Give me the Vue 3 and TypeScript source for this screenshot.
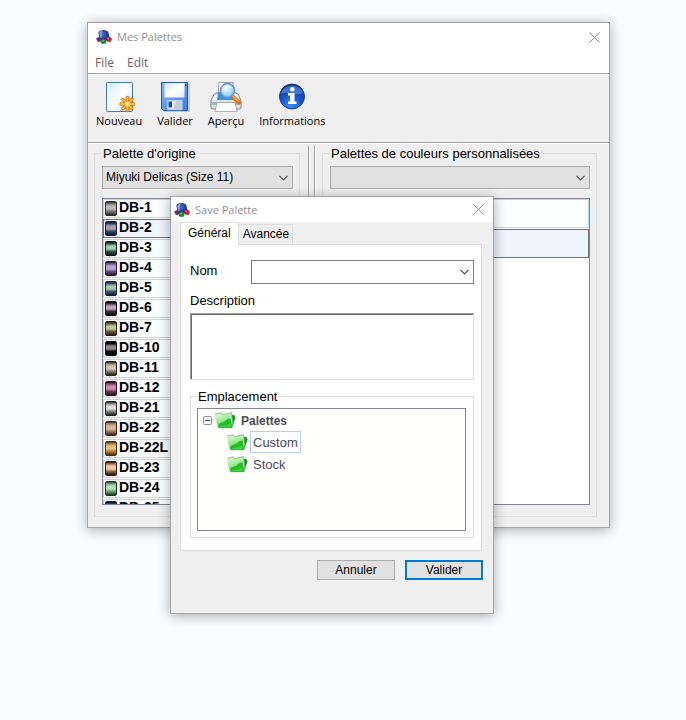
<script setup lang="ts">
import { ref } from 'vue'

interface Bead {
  code: string
  dark: string
  light: string
  base: string
}

const beads: Bead[] = [
  { code: 'DB-1', dark: '#2b2a2a', light: '#bdbbb8', base: '#77736f' },
  { code: 'DB-2', dark: '#10182c', light: '#b79aa8', base: '#1f4a78' },
  { code: 'DB-3', dark: '#0a1512', light: '#9fd0b4', base: '#2c5546' },
  { code: 'DB-4', dark: '#241a30', light: '#bda2d6', base: '#66507e' },
  { code: 'DB-5', dark: '#151c2a', light: '#a8c8ac', base: '#3f5878' },
  { code: 'DB-6', dark: '#0c090c', light: '#c69fc4', base: '#3a3038' },
  { code: 'DB-7', dark: '#2c1e12', light: '#b4cc9a', base: '#6e5434' },
  { code: 'DB-10', dark: '#000000', light: '#8d8d8d', base: '#0c0c0c' },
  { code: 'DB-11', dark: '#26221c', light: '#d2c8b4', base: '#857a66' },
  { code: 'DB-12', dark: '#250f1c', light: '#cc8cb4', base: '#75395c' },
  { code: 'DB-21', dark: '#20221f', light: '#dcded6', base: '#80857c' },
  { code: 'DB-22', dark: '#37251b', light: '#dcb898', base: '#a07a5e' },
  { code: 'DB-22L', dark: '#4a2e0e', light: '#e8c078', base: '#b07e34' },
  { code: 'DB-23', dark: '#2c1410', light: '#e8d0a4', base: '#98604a' },
  { code: 'DB-24', dark: '#1e3424', light: '#b0e4b4', base: '#6aa078' },
  { code: 'DB-25', dark: '#101030', light: '#8890d0', base: '#283078' }
]

const selectedBead = ref('DB-2')
const origin = ref('Miyuki Delicas (Size 11)')
const custom = ref('')
const paletteName = ref('')
const description = ref('')
const expanded = ref(true)
const selectedFolder = ref('Custom')
const folders = ['Custom', 'Stock']
</script>

<template>
  <svg class="defs" width="0" height="0" aria-hidden="true">
    <defs>
      <linearGradient id="gSheet" x1="0" y1="0" x2="1" y2="1">
        <stop offset="0" stop-color="#d3e9fa" /><stop offset=".5" stop-color="#ffffff" /><stop offset="1" stop-color="#c4e0f4" />
      </linearGradient>
      <linearGradient id="gDisk" x1="0" y1="0" x2="1" y2="1">
        <stop offset="0" stop-color="#7ebdfa" /><stop offset="1" stop-color="#3a7aec" />
      </linearGradient>
      <linearGradient id="gLabel" x1="0" y1="0" x2="1" y2="1">
        <stop offset="0" stop-color="#d8e6fa" /><stop offset=".55" stop-color="#ffffff" /><stop offset="1" stop-color="#dfeafc" />
      </linearGradient>
      <radialGradient id="gInfo" cx=".45" cy=".85" r=".8">
        <stop offset="0" stop-color="#3b8df0" /><stop offset=".55" stop-color="#1553cc" /><stop offset="1" stop-color="#0c37a0" />
      </radialGradient>
      <radialGradient id="gLens" cx=".4" cy=".35" r=".75">
        <stop offset="0" stop-color="#f2fcff" /><stop offset=".6" stop-color="#a4daf6" /><stop offset="1" stop-color="#6db8ea" />
      </radialGradient>
      <linearGradient id="gFolder" x1="0" y1="0" x2=".5" y2="1">
        <stop offset="0" stop-color="#e2fcdc" /><stop offset=".5" stop-color="#9cf092" /><stop offset="1" stop-color="#48d044" />
      </linearGradient>
      <radialGradient id="gBlue" cx=".4" cy=".4" r=".7">
        <stop offset="0" stop-color="#3f6cd4" /><stop offset="1" stop-color="#141d70" />
      </radialGradient>
      <symbol id="appLogo" viewBox="0 0 16 16">
        <path d="M2.500 3.500C2.500 0 12 0 12.500 3.500L13.500 10.500C12.500 12 4.500 12 3.500 10.500Z" fill="url(#gBlue)" />
        <path d="M3.500 3.500C3.500 2 6.500 1.500 6.500 1.500L5.500 9 4 9Z" fill="#a5bdda" opacity=".75" />
        <path d="M0 9.500 3 8 5.500 9.500 5 12.500 2 13Z" fill="#6d2580" />
        <path d="M10 8.500 14 7.500 16 10 14.500 13 11 12.500Z" fill="#d01636" />
        <path d="M11 9 13.500 8.500 12.500 11Z" fill="#ee6680" />
        <path d="M4.500 11 7.500 9.500 10.500 11 10 14.500 6.500 15 5 14Z" fill="#218a30" />
        <path d="M5.500 11.500 8 10.700 7.500 13Z" fill="#62cc58" />
      </symbol>
      <symbol id="folder" viewBox="0 0 22 18">
        <path d="M14 6 20 3.500 21.500 6.500 18.500 14 14.500 16.500Z" fill="#1d8f1e" />
        <path d="M1 3 7.500 1.800 9 3.500 17.500 1.500 18.800 12 17 16.500Z" fill="#b4f0ae" stroke="#6aa868" stroke-width=".6" />
        <path d="M.7 3.500 7 3 9 6.200 16.500 5.200 18 16.500 4.500 16.500C3 14 1.500 8 .7 3.500Z" fill="url(#gFolder)" />
        <path d="M3.800 15C5.500 10.500 9 12.500 11.500 9.500 13 7.800 15 7.500 16.800 7.800L18 16.500H4.500Z" fill="#16b81c" opacity=".85" />
        <path d="M5.500 16C9 14 13 15.500 16 12L17 16.300Z" fill="#5ce056" opacity=".6" />
        <path d="M4.500 16.700H18.200L20.800 7" fill="none" stroke="#2a8a2c" stroke-width=".6" />
      </symbol>
      <symbol id="cross" viewBox="0 0 11 11">
        <path d="M.5.5 10.500 10.500M10.500.5.5 10.500" stroke="#8c8c8c" fill="none" />
      </symbol>
      <symbol id="chevron" viewBox="0 0 9 6">
        <path d="M.5.8 4.500 4.800 8.500.8" stroke="#4c4c4c" stroke-width="1.200" fill="none" />
      </symbol>
    </defs>
  </svg>

  <main class="desktop">
    <section class="window" aria-label="Mes Palettes">
      <header class="titlebar main-title">
        <svg class="logo"><use href="#appLogo" /></svg>
        <h1>Mes Palettes</h1>
        <button class="close" type="button" aria-label="Fermer"><svg><use href="#cross" /></svg></button>
      </header>
      <nav class="menubar">
        <button type="button">File</button>
        <button type="button">Edit</button>
      </nav>

      <div class="toolbar">
        <button type="button">
          <svg viewBox="0 0 32 32">
            <rect x="3.500" y="1.500" width="26" height="29" rx="1" fill="url(#gSheet)" stroke="#3f7fae" />
            <g stroke="#d9741c" stroke-width="3.400" stroke-linecap="round">
              <path d="M24.500 16.500V29.500M18 23H31M20 18.500 29 27.500M29 18.500 20 27.500" />
            </g>
            <g stroke="#ffd44a" stroke-width="1.500" stroke-linecap="round">
              <path d="M24.500 16.500V29.500M18 23H31M20 18.500 29 27.500M29 18.500 20 27.500" />
            </g>
            <circle cx="24.500" cy="23" r="1.600" fill="#fff3a0" />
          </svg>
          <span>Nouveau</span>
        </button>
        <button type="button">
          <svg viewBox="0 0 32 32">
            <path d="M4 3H31V31H5Z" fill="#000" opacity=".15" />
            <path d="M2.500 1.500H28.500V29.500H4.500L2.500 27.500Z" fill="url(#gDisk)" stroke="#2857b8" />
            <path d="M5.500 2H25.500V15.500Q25.500 16.500 24.500 16.500H6.500Q5.500 16.500 5.500 15.500Z" fill="url(#gLabel)" />
            <path d="M8 19H23.500V29H8Z" fill="#e6ecf5" stroke="#7da3dc" stroke-width=".7" />
            <path d="M17 19H23V29H14Z" fill="#c5ccd8" />
            <rect x="9.500" y="20.500" width="3.500" height="6" fill="#244a9c" />
            <path d="M26 3.500H27.500V5H26Z" fill="#173a8c" />
          </svg>
          <span>Valider</span>
        </button>
        <button type="button">
          <svg viewBox="0 0 32 32">
            <path d="M9 1.500H23V16H8Z" fill="#fff" stroke="#9a9a9a" />
            <path d="M4 13.500 8 11.500H25L28.500 13.500 31 20V26.500Q31 28 29 28H3Q1 28 1 26.500V19Z" fill="#dfe3e8" stroke="#7d828a" />
            <path d="M4.500 13.500H28L29.500 19H2.500Z" fill="#f3f5f7" />
            <path d="M8 11.500H22L25 19H7Z" fill="#2e96e4" />
            <path d="M2 21H30V24H2Z" fill="#adb3ba" />
            <path d="M7 21.500H25L27 30.500H5Z" fill="#fbfcfd" stroke="#999da4" stroke-width=".8" />
            <path d="M22.500 15.500 29 21.500" stroke="#d9661a" stroke-width="4" stroke-linecap="round" />
            <path d="M22.500 15 28.500 20.500" stroke="#ffb53c" stroke-width="1.600" stroke-linecap="round" />
            <circle cx="17.500" cy="9.500" r="7" fill="url(#gLens)" stroke="#6794c4" stroke-width="1.500" />
            <path d="M12.500 9C14 4.500 19 4 21.500 6.500 18 7 15 8 12.500 9Z" fill="#fff" opacity=".75" />
          </svg>
          <span>Aperçu</span>
        </button>
        <button type="button">
          <svg viewBox="0 0 32 32">
            <circle cx="16" cy="15.500" r="12.500" fill="url(#gInfo)" stroke="#163a94" />
            <path d="M5 13C7 3 24 1.500 27 12 20 16 12 9 5 13Z" fill="#7eb0f2" opacity=".45" />
            <circle cx="16.300" cy="8.200" r="2.300" fill="#fff" />
            <path d="M12 12H18.500V20.500H20.500V23H12V20.500H14V14.500H12Z" fill="#fff" />
          </svg>
          <span>Informations</span>
        </button>
      </div>

      <div class="panes">
        <fieldset class="group origin">
          <legend>Palette d'origine</legend>
          <div class="combo grey">
            <select v-model="origin" aria-label="Palette d'origine">
              <option>Miyuki Delicas (Size 11)</option>
            </select>
            <svg><use href="#chevron" /></svg>
          </div>
          <ul class="list" role="listbox" aria-label="Palette d'origine">
            <li
              v-for="bead in beads"
              :key="bead.code"
              class="bead"
              role="option"
              :aria-selected="bead.code === selectedBead"
              :class="{ selected: bead.code === selectedBead }"
              @click="selectedBead = bead.code"
            >
              <i :style="{ '--dark': bead.dark, '--light': bead.light, '--base': bead.base }"></i>{{ bead.code }}
            </li>
          </ul>
        </fieldset>
        <div class="splitter" role="separator"></div>
        <fieldset class="group personal">
          <legend>Palettes de couleurs personnalisées</legend>
          <div class="combo grey">
            <select v-model="custom" aria-label="Palettes de couleurs personnalisées">
              <option value=""></option>
            </select>
            <svg><use href="#chevron" /></svg>
          </div>
          <ul class="list" role="listbox" aria-label="Palettes de couleurs personnalisées">
            <li class="slot" role="option" aria-selected="false"></li>
            <li class="slot selected" role="option" aria-selected="true"></li>
          </ul>
        </fieldset>
      </div>
    </section>

    <form class="window dialog" role="dialog" aria-label="Save Palette" @submit.prevent>
      <header class="titlebar">
        <svg class="logo"><use href="#appLogo" /></svg>
        <h2>Save Palette</h2>
        <button class="close" type="button" aria-label="Fermer"><svg><use href="#cross" /></svg></button>
      </header>
      <div class="dialog-body">
        <div class="tabs" role="tablist">
          <button type="button" role="tab" aria-selected="true" class="active">Général</button>
          <button type="button" role="tab" aria-selected="false">Avancée</button>
        </div>
        <div class="panel" role="tabpanel">
          <div class="row">
            <label for="palette-name">Nom</label>
            <div class="combo">
              <select id="palette-name" v-model="paletteName"><option value=""></option></select>
              <svg><use href="#chevron" /></svg>
            </div>
          </div>
          <label class="description-label" for="palette-description">Description</label>
          <textarea id="palette-description" v-model="description"></textarea>
          <fieldset class="group location">
            <legend>Emplacement</legend>
            <div class="tree" role="tree">
              <div class="node root" role="treeitem" :aria-expanded="expanded">
                <button class="expander" type="button" aria-label="Palettes" @click="expanded = !expanded">
                  <svg viewBox="0 0 9 9">
                    <rect x=".5" y=".5" width="8" height="8" rx="1" fill="#f2f2f2" stroke="#919191" />
                    <path d="M2 4.500H7" stroke="#3a4fae" />
                    <path v-if="!expanded" d="M4.500 2V7" stroke="#3a4fae" />
                  </svg>
                </button>
                <svg class="folder"><use href="#folder" /></svg>
                <span>Palettes</span>
              </div>
              <template v-if="expanded">
                <div
                  v-for="folder in folders"
                  :key="folder"
                  class="node child"
                  role="treeitem"
                  :class="{ selected: folder === selectedFolder }"
                  @click="selectedFolder = folder"
                >
                  <svg class="folder"><use href="#folder" /></svg>
                  <span>{{ folder }}</span>
                </div>
              </template>
            </div>
          </fieldset>
        </div>
        <div class="actions">
          <button type="button">Annuler</button>
          <button type="submit" class="default">Valider</button>
        </div>
      </div>
    </form>
  </main>
</template>

<style>
body {
  background: #f9fdff;
}
</style>

<style scoped>
* {
  box-sizing: border-box;
}
.defs {
  position: absolute;
}
.desktop {
  position: relative;
  min-height: 100vh;
  padding: 22px 76px 0 87px;
  font: 13px/15px "Liberation Sans", Arial, sans-serif;
  color: #000;
}
button,
select,
textarea {
  margin: 0;
  padding: 0;
  border: 0;
  background: none;
  font: inherit;
  color: inherit;
}
.window {
  background: #efefef;
  border: 1px solid #a2a4a6;
  box-shadow: 0 2px 12px rgba(0, 0, 0, 0.32);
}
.titlebar {
  display: flex;
  align-items: center;
  height: 25px;
  padding: 0 9px 0 3px;
  background: #fff;
  color: #8f8f8f;
}
.main-title {
  height: 28px;
  padding-left: 8px;
}
.logo {
  width: 16px;
  height: 16px;
}
h1,
h2 {
  flex: 1;
  margin: 0 0 0 5px;
  font: 11px/16px "Open Sans", "Noto Sans", sans-serif;
}
.close,
.close svg {
  display: block;
  width: 11px;
  height: 11px;
}
.menubar {
  display: flex;
  gap: 13px;
  height: 23px;
  padding: 0 7px;
  border-bottom: 1px solid #a0a0a0;
  background: #fff;
  color: #666;
  font: 12px/24px "Open Sans", "Noto Sans", sans-serif;
}
.toolbar {
  display: flex;
  align-items: flex-start;
  gap: 15px;
  height: 69px;
  padding: 6px 8px 0;
  border-top: 1px solid #fff;
  border-bottom: 1px solid #a0a0a0;
}
.toolbar button {
  display: flex;
  flex-direction: column;
  align-items: center;
  font: 11px/16px "Open Sans", "Noto Sans", sans-serif;
}
.toolbar svg {
  width: 32px;
  height: 32px;
}
.panes {
  display: flex;
  padding: 2px 12px 10px 6px;
  border-top: 1px solid #fff;
}
.group {
  min-width: 0;
  margin: 0;
  border: 1px solid #dcdcdc;
}
.group legend {
  padding: 0 1px;
}
.origin,
.personal {
  padding: 5px 6px 11px 7px;
}
.origin {
  flex: 0 0 206px;
}
.personal {
  flex: 1;
}
.splitter {
  width: 8px;
  margin: 0 6px 0 8px;
  border: solid #a0a0a0;
  border-width: 0 0 0 1px;
  box-shadow: inset 1px 0 #fff, inset -1px 0 #fff, inset -2px 0 #a0a0a0;
}
.combo {
  position: relative;
  height: 24px;
  border: 1px solid #7a7a7a;
  background: #fff;
}
.combo.grey {
  height: 23px;
  border-color: #adadad;
  background: #e1e1e1;
}
.combo select {
  display: block;
  width: 100%;
  height: 100%;
  padding: 0 20px 0 3px;
  font-size: 12px;
  appearance: none;
}
.combo svg {
  position: absolute;
  top: 8px;
  right: 4px;
  width: 9px;
  height: 6px;
  pointer-events: none;
}
.list {
  height: 307px;
  margin: 9px 0 0;
  padding: 0;
  overflow: hidden;
  border: 1px solid #828790;
  background: #fff;
  list-style: none;
}
.bead,
.slot {
  height: 19px;
  margin-bottom: 1px;
  border: 1px solid #a9dff5;
  background: #fafeff;
}
.slot {
  height: 29px;
}
.slot:not(.selected) {
  border-left-color: transparent;
}
.bead.selected,
.slot.selected {
  border-color: #70747c;
  background: #eef5ff;
}
.bead {
  display: flex;
  align-items: flex-start;
  gap: 2px;
  padding-left: 1px;
  font: bold 14px/15px "Liberation Sans", Arial, sans-serif;
}
.bead i {
  width: 12px;
  height: 15px;
  margin-top: 1px;
  border: 1px solid var(--dark);
  border-radius: 2px;
  background: linear-gradient(var(--dark), var(--base) 12%, var(--light) 32%, var(--light) 54%, var(--base) 72%, var(--dark));
}
.dialog {
  position: absolute;
  top: 196px;
  left: 170px;
  width: 324px;
}
.dialog-body {
  padding: 0 11px 33px 9px;
}
.tabs {
  display: flex;
  align-items: flex-end;
}
.tabs button {
  height: 20px;
  padding: 0 3px 0 4px;
  border: 1px solid #dcdcdc;
  border-width: 1px 1px 0 0;
  font-size: 12px;
}
.tabs .active {
  position: relative;
  height: 23px;
  margin-bottom: -1px;
  padding: 0 7px 2px;
  border-left-width: 1px;
  background: #fff;
}
.panel {
  padding: 15px 7px 12px 9px;
  border: 1px solid #dcdcdc;
  background: #fff;
}
.row {
  display: flex;
}
.row label {
  flex: 0 0 61px;
  line-height: 22px;
}
.row .combo {
  flex: 1;
}
.description-label {
  display: block;
  margin-top: 9px;
}
textarea {
  display: block;
  width: 100%;
  height: 67px;
  margin: 5px 0 9px;
  border: 1px solid #dedede;
  border-top-color: #a0a0a0;
  border-left-color: #a0a0a0;
  box-shadow: inset 1px 1px #696969;
  resize: none;
}
.location {
  padding: 4px 7px 6px 6px;
}
.tree {
  height: 123px;
  border: 1px solid #828790;
  background: #fffffd;
  color: #4c4c58;
}
.node {
  display: flex;
  align-items: center;
  height: 22px;
}
.root {
  padding-left: 5px;
  font-size: 12px;
  font-weight: bold;
}
.child {
  padding-left: 28px;
}
.expander,
.expander svg {
  display: block;
  width: 9px;
  height: 9px;
}
.expander {
  margin-right: 2px;
}
.folder {
  width: 22px;
  height: 18px;
  margin-right: 2px;
}
.node span {
  height: 22px;
  padding: 0 2px;
  border: 1px solid transparent;
  line-height: 22px;
}
.node.selected span {
  border-color: #b4d0ee;
  background: #fbfdff;
}
.actions {
  display: flex;
  justify-content: flex-end;
  gap: 10px;
  margin: 9px -1px 0 0;
}
.actions button {
  width: 78px;
  height: 20px;
  border: 1px solid #adadad;
  background: #e1e1e1;
  font-size: 12px;
}
.actions .default {
  border: 2px solid #0078d7;
}
</style>
